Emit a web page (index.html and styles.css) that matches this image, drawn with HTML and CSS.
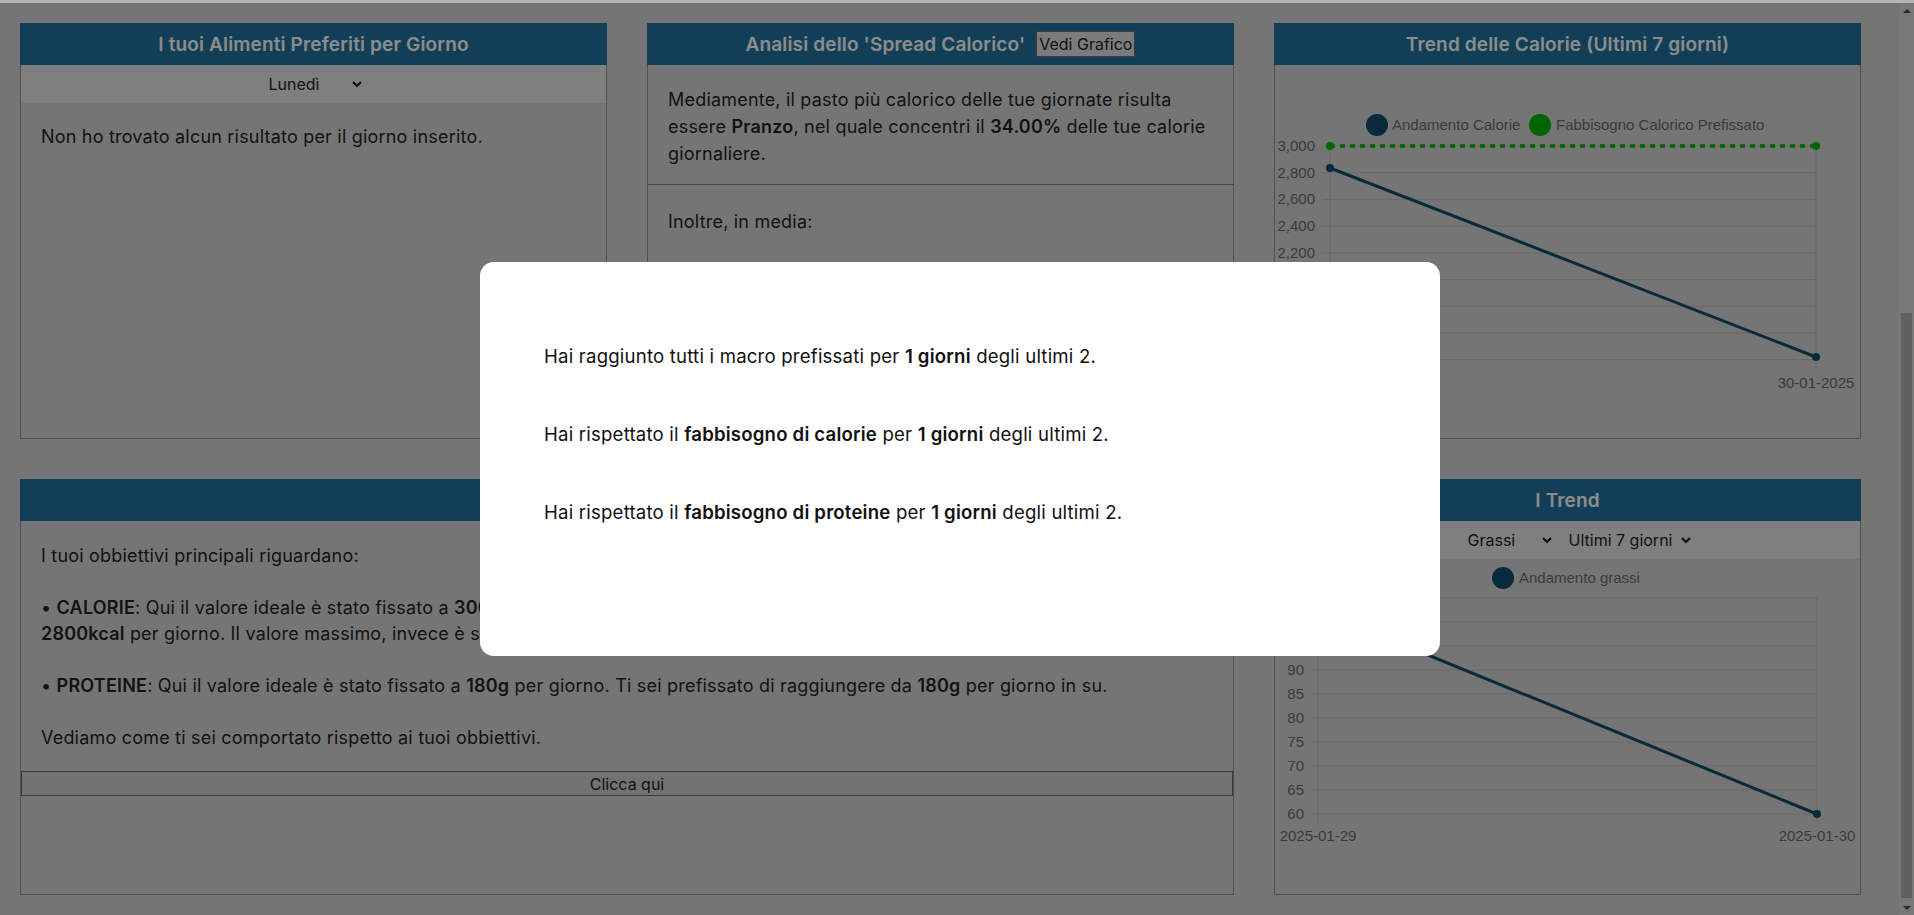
FILE: index.html
```html
<!DOCTYPE html>
<html lang="it">
<head>
<meta charset="utf-8">
<title>Dashboard</title>
<link rel="stylesheet" href="styles.css">
</head>
<body>
<div class="topline"></div>
<div class="screen">
  <main class="dashboard">
    <section class="card">
      <header class="card-header"><h2>I tuoi Alimenti Preferiti per Giorno</h2></header>
      <div class="toolbar">
        <label class="select select-day">
          <select><option>Lunedì</option><option>Martedì</option><option>Mercoledì</option><option>Giovedì</option><option>Venerdì</option><option>Sabato</option><option>Domenica</option></select>
          <svg class="chev" width="12" height="8" viewBox="0 0 12 8"><path d="M2 2l4 4 4-4" fill="none" stroke="currentColor" stroke-width="2.2"/></svg>
        </label>
      </div>
      <div class="card-body"><p>Non ho trovato alcun risultato per il giorno inserito.</p></div>
    </section>

    <section class="card">
      <header class="card-header"><h2>Analisi dello 'Spread Calorico'</h2><button class="btn-chart" type="button">Vedi Grafico</button></header>
      <div class="card-section first"><p>Mediamente, il pasto più calorico delle tue giornate risulta essere <b>Pranzo</b>, nel quale concentri il <b>34.00%</b> delle tue calorie giornaliere.</p></div>
      <div class="card-section second">
        <p>Inoltre, in media:</p>
      </div>
    </section>

    <section class="card">
      <header class="card-header"><h2>Trend delle Calorie (Ultimi 7 giorni)</h2></header>
      <div class="chart">
        <svg class="chart-svg" width="585" height="373" viewBox="0 0 585 373">
          <g class="legend">
            <circle cx="102" cy="60" r="11" class="c-navy"/>
            <text x="117" y="65">Andamento Calorie</text>
            <circle cx="265" cy="60" r="11" class="c-green"/>
            <text x="281" y="65">Fabbisogno Calorico Prefissato</text>
          </g>
          <g class="grid">
            <line x1="47" y1="81" x2="541" y2="81"/>
            <line x1="47" y1="107.7" x2="541" y2="107.7"/>
            <line x1="47" y1="134.4" x2="541" y2="134.4"/>
            <line x1="47" y1="161.1" x2="541" y2="161.1"/>
            <line x1="47" y1="187.8" x2="541" y2="187.8"/>
            <line x1="47" y1="214.5" x2="541" y2="214.5"/>
            <line x1="47" y1="241.2" x2="541" y2="241.2"/>
            <line x1="47" y1="267.9" x2="541" y2="267.9"/>
            <line x1="47" y1="294.6" x2="541" y2="294.6"/>
            <line x1="55" y1="81" x2="55" y2="303"/>
            <line x1="541" y1="81" x2="541" y2="303"/>
          </g>
          <g class="ticks" text-anchor="end">
            <text x="40" y="86">3,000</text>
            <text x="40" y="112.7">2,800</text>
            <text x="40" y="139.4">2,600</text>
            <text x="40" y="166.1">2,400</text>
            <text x="40" y="192.8">2,200</text>
            <text x="40" y="219.5">2,000</text>
            <text x="40" y="246.2">1,800</text>
            <text x="40" y="272.9">1,600</text>
            <text x="40" y="299.6">1,400</text>
          </g>
          <g class="ticks" text-anchor="middle">
            <text x="55" y="323">29-01-2025</text>
            <text x="541" y="323">30-01-2025</text>
          </g>
          <line x1="55" y1="81" x2="541" y2="81" class="dash-green"/>
          <circle cx="55" cy="81" r="4" class="c-green"/>
          <circle cx="541" cy="81" r="4" class="c-green"/>
          <line x1="55" y1="103" x2="541" y2="292" class="line-navy"/>
          <circle cx="55" cy="103" r="4" class="c-navy"/>
          <circle cx="541" cy="292" r="4" class="c-navy"/>
        </svg>
      </div>
    </section>

    <section class="card card-wide">
      <header class="card-header"><h2>I tuoi Obbiettivi</h2></header>
      <div class="card-body goals">
        <p>I tuoi obbiettivi principali riguardano:</p>
        <p>•&nbsp;<b>CALORIE</b>: Qui il valore ideale è stato fissato a <b>3000kcal</b> per giorno. Il valore minimo che ti sei prefissato di raggiungere ogni giorno è <b>2800kcal</b> per giorno. Il valore massimo, invece è stato fissato a <b>3200kcal</b> per giorno.</p>
        <p>•&nbsp;<b>PROTEINE</b>: Qui il valore ideale è stato fissato a <b>180g</b> per giorno. Ti sei prefissato di raggiungere da <b>180g</b> per giorno in su.</p>
        <p>Vediamo come ti sei comportato rispetto ai tuoi obbiettivi.</p>
      </div>
      <button class="btn-wide" type="button">Clicca qui</button>
    </section>

    <section class="card">
      <header class="card-header"><h2>I Trend</h2></header>
      <div class="toolbar toolbar-trend">
        <label class="select select-macro">
          <select><option>Grassi</option><option>Proteine</option><option>Carboidrati</option></select>
          <svg class="chev" width="12" height="8" viewBox="0 0 12 8"><path d="M2 2l4 4 4-4" fill="none" stroke="currentColor" stroke-width="2.2"/></svg>
        </label>
        <label class="select select-range">
          <select><option>Ultimi 7 giorni</option><option>Ultimi 30 giorni</option></select>
          <svg class="chev" width="12" height="8" viewBox="0 0 12 8"><path d="M2 2l4 4 4-4" fill="none" stroke="currentColor" stroke-width="2.2"/></svg>
        </label>
      </div>
      <div class="chart">
        <svg class="chart-svg" width="585" height="335" viewBox="0 0 585 335">
          <g class="legend">
            <circle cx="228" cy="19" r="11" class="c-navy"/>
            <text x="244" y="24">Andamento grassi</text>
          </g>
          <g class="grid">
            <line x1="35" y1="39" x2="542" y2="39"/>
            <line x1="35" y1="63" x2="542" y2="63"/>
            <line x1="35" y1="87" x2="542" y2="87"/>
            <line x1="35" y1="111" x2="542" y2="111"/>
            <line x1="35" y1="135" x2="542" y2="135"/>
            <line x1="35" y1="159" x2="542" y2="159"/>
            <line x1="35" y1="183" x2="542" y2="183"/>
            <line x1="35" y1="207" x2="542" y2="207"/>
            <line x1="35" y1="231" x2="542" y2="231"/>
            <line x1="35" y1="255" x2="542" y2="255"/>
            <line x1="43" y1="39" x2="43" y2="263"/>
            <line x1="542" y1="39" x2="542" y2="263"/>
          </g>
          <g class="ticks" text-anchor="end">
            <text x="29" y="44">105</text>
            <text x="29" y="68">100</text>
            <text x="29" y="92">95</text>
            <text x="29" y="116">90</text>
            <text x="29" y="140">85</text>
            <text x="29" y="164">80</text>
            <text x="29" y="188">75</text>
            <text x="29" y="212">70</text>
            <text x="29" y="236">65</text>
            <text x="29" y="260">60</text>
          </g>
          <g class="ticks" text-anchor="middle">
            <text x="43" y="282">2025-01-29</text>
            <text x="542" y="282">2025-01-30</text>
          </g>
          <line x1="43" y1="51" x2="542" y2="255" class="line-navy"/>
          <circle cx="43" cy="51" r="4" class="c-navy"/>
          <circle cx="542" cy="255" r="4" class="c-navy"/>
        </svg>
      </div>
    </section>
  </main>

  <div class="scrollbar">
    <div class="sb-arrow up"></div>
    <div class="sb-track"><div class="sb-thumb"></div></div>
    <div class="sb-arrow down"></div>
  </div>
</div>

<div class="overlay">
  <div class="modal">
    <p>Hai raggiunto tutti i macro prefissati per <b>1 giorni</b> degli ultimi 2.</p>
    <p>Hai rispettato il <b>fabbisogno di calorie</b> per <b>1 giorni</b> degli ultimi 2.</p>
    <p>Hai rispettato il <b>fabbisogno di proteine</b> per <b>1 giorni</b> degli ultimi 2.</p>
  </div>
</div>
</body>
</html>
```

FILE: styles.css
```css
* { box-sizing: border-box; }

html, body {
  margin: 0;
  height: 100%;
  overflow: hidden;
}

body {
  font-family: "Inter", "Noto Sans", sans-serif;
  letter-spacing: 0.2px;
  color: #242424;
  background: #d6d6d6;
}

b { font-weight: 600; }

.topline {
  height: 3px;
  background: #b4b4b4;
}

.screen {
  display: flex;
  height: 912px;
}

.dashboard {
  flex: 1;
  display: grid;
  grid-template-columns: repeat(3, 587px);
  grid-template-rows: 416px 416px;
  gap: 40px;
  padding: 20px;
  align-content: start;
}

.card {
  display: flex;
  flex-direction: column;
  border: 1px solid #929292;
  border-top: 0;
  background: #d6d6d6;
  min-width: 0;
}

.card-wide { grid-column: span 2; }

.card-header {
  height: 42px;
  margin: 0 -1px;
  background: #21739e;
  display: flex;
  align-items: center;
  justify-content: center;
  gap: 11px;
  flex-shrink: 0;
}

.card-header h2 {
  margin: 0;
  font-size: 19px;
  font-weight: 600;
  letter-spacing: 0.15px;
  color: #ffffff;
}

.btn-chart {
  font: 16px "Inter", sans-serif;
  letter-spacing: 0;
  color: #1f1f1f;
  background: #e0e0e0;
  border: 1px solid #6a6a6a;
  padding: 0 2px;
  height: 26px;
}

.toolbar {
  height: 38px;
  background: #e7e7e7;
  display: flex;
  align-items: center;
  justify-content: center;
  gap: 12px;
  flex-shrink: 0;
}

.toolbar-trend { padding-left: 20px; }

.select {
  display: flex;
  align-items: center;
  color: #1f1f1f;
}

.select select {
  appearance: none;
  -webkit-appearance: none;
  border: 0;
  background: transparent;
  font: 16px "Inter", sans-serif;
  letter-spacing: 0;
  color: #1f1f1f;
  padding: 0 0 0 4px;
  outline: none;
}

.select-day select { width: 82px; }
.select-macro select { width: 73px; }
.select-range select { width: 111px; }

.chev { margin-left: 4px; flex-shrink: 0; }

.card-body { padding: 20px; }

.card-body p,
.card-section p {
  margin: 0;
  font-size: 18px;
  line-height: 27px;
}

.card-section { padding: 21px 20px 17px; }
.card-section.second {
  border-top: 1px solid #878787;
  padding-top: 23px;
}

.goals { padding: 22px 20px 20px; }
.goals p {
  line-height: 26px;
  margin-bottom: 26px;
}
.goals p:last-child { margin-bottom: 0; }

.btn-wide {
  height: 25px;
  width: 100%;
  border: 1px solid #6a6a6a;
  background: #d0d0d0;
  font: 16px "Inter", sans-serif;
  letter-spacing: 0;
  color: #1f1f1f;
}

.chart { flex: 1; }
.chart-svg { display: block; }

.chart-svg text {
  font-family: "Liberation Sans", Arial, sans-serif;
  font-size: 15px;
  letter-spacing: 0;
}
.legend text { fill: #6b6b6b; }
.ticks text { fill: #6b6b6b; }
.grid line { stroke: rgba(0, 0, 0, 0.1); stroke-width: 1; }
.c-navy { fill: #124c6d; }
.c-green { fill: #00b600; }
.line-navy { stroke: #124c6d; stroke-width: 3; }
.dash-green { stroke: #00b600; stroke-width: 3.5; stroke-dasharray: 5 5; }

.scrollbar {
  width: 15px;
  display: flex;
  flex-direction: column;
  background: #dadada;
}
.sb-arrow {
  height: 15px;
  display: flex;
  align-items: center;
  justify-content: center;
}
.sb-arrow::before {
  content: "";
  border-left: 4px solid transparent;
  border-right: 4px solid transparent;
}
.sb-arrow.up::before { border-bottom: 4px solid #4d4d4d; }
.sb-arrow.down::before { border-top: 4px solid #4d4d4d; }
.sb-track {
  flex: 1;
  display: flex;
  flex-direction: column;
  padding: 295px 2px 2px;
}
.sb-thumb { flex: 1; background: #b0b0b0; }

.overlay {
  position: fixed;
  top: 3px;
  left: 0;
  right: 0;
  bottom: 0;
  background: rgba(0, 0, 0, 0.45);
  display: flex;
  align-items: center;
  justify-content: center;
  padding-left: 6px;
}

.modal {
  width: 960px;
  height: 394px;
  background: #ffffff;
  border-radius: 14px;
  padding: 82px 64px 0;
  display: flex;
  flex-direction: column;
  gap: 54px;
  color: #111;
}

.modal p {
  margin: 0;
  font-size: 18.6px;
  line-height: 24px;
}
```
